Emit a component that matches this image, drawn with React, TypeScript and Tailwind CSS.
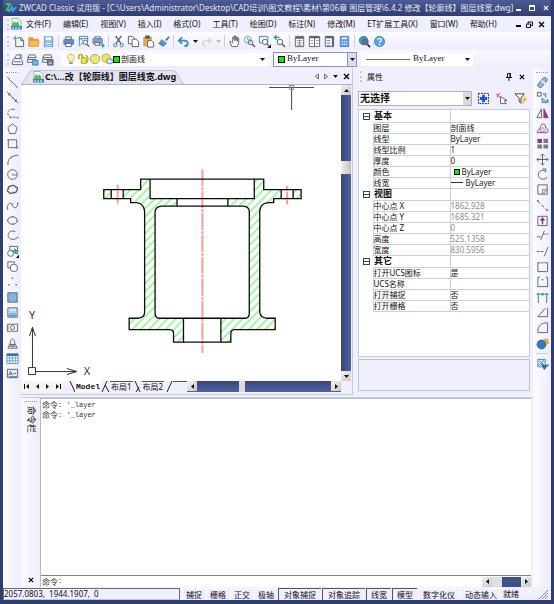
import type { ReactNode } from "react";

const S = "#5b6068";
const B = "#3f86c8";
const P = "#8a3a86";

const Icon = ({ children, className = "" }: { children: ReactNode; className?: string }) => (
  <svg viewBox="0 0 14 14" width="14" height="14" fill="none" stroke={S} className={`shrink-0 ${className}`}>
    {children}
  </svg>
);

/* Standard toolbar */
const fileTools: [string, ReactNode][] = [
  ["New", <><path d="M4 5v7.500h8.500V6L9.500 3H6" /><path d="M9.500 3v3h3" /><path d="M1 3.500h5M3.500 1v5" stroke="#2fa36b" /></>],
  ["Open", <><path d="M2 3h4l1 1.500h5V12H2z" fill="#e8a33a" stroke="#d9962f" /><path d="M2 12l1.500-6H13l-1 6z" fill="#f5bd5c" stroke="#e0a03c" /></>],
  ["Save", <><path d="M2.500 2h9v10.500h-9z" fill="#8fbde8" stroke="#5d97cf" /><path d="M4 2.500h6v3H4z" fill="#fff" stroke="none" /><path d="M4 8.500h6V12H4z" fill="#e7f1fb" stroke="none" /><path d="M4 10.500h6" stroke="#5d97cf" /></>],
];
const printTools: [string, ReactNode][] = [
  ["Print", <><path d="M4 2h6v3H4z" fill="#e8eef5" /><path d="M2 5h10.500v5H2z" fill="#5d93c8" stroke="#4a80b8" /><path d="M4 9h6v3.500H4z" fill="#fff" /></>],
  ["Preview", <><path d="M2.500 12V1.500h9V8" stroke={B} /><path d="M2 4h10M4 4l3 3-3 4" stroke={B} /><circle cx="9" cy="8" r="2.300" fill="#fff" /><path d="M10.800 10l2.200 2.500" strokeWidth="1.500" /></>],
  ["Publish", <><path d="M3 2h6v2H3z" fill="#fff" /><path d="M1 4h10v5H1z" fill="#7aa5cf" stroke="#5d8ab5" /><path d="M3 8h5v3H3z" fill="#fff" /><path d="M7 10.500h4V8.500l3 3-3 2.500v-2z" fill="#2fa36b" stroke="none" /></>],
];
const editTools: [string, ReactNode][] = [
  ["Cut", <><path d="M4 1l5.500 8M10 1L4.500 9" strokeWidth="1.500" /><circle cx="3.500" cy="11" r="1.800" stroke="#3474b3" /><circle cx="10.500" cy="11" r="1.800" stroke="#3474b3" /></>],
  ["Copy", <><path d="M1.500 1.500H6L8.500 4v5.500h-7z" fill="#fff" /><path d="M5.500 4.500H10L12.500 7v5.500h-7z" fill="#fff" /></>],
  ["Paste", <><path d="M2 2.500h8v9H2z" fill="#eda94a" stroke="#d48f2e" /><path d="M4 1h4v2.500H4z" fill={S} /><path d="M6 6h4l2.500 2v5H6z" fill="#fff" /></>],
  ["Match", <><path d="M13 2L9.500 6" strokeWidth="1.600" /><path d="M5 5l5 4-2 2-5-3z" fill="#5c9bd4" stroke="#4a86c0" /><path d="M3 7.500L1 9l6 4 1-2z" fill="#4a86c0" stroke="none" /></>],
];
const undoIcon = <><path d="M5.500 2.500L2 6l3.500 3.500" stroke={B} strokeWidth="2" /><path d="M2.500 6H8c5 0 4.500 6 0 6" stroke={B} strokeWidth="2" /></>;
const redoIcon = <><path d="M9 3l3 3-3 3M12 6H6c-4 0-4 5.500 0 5.500" stroke="#d3d6e2" strokeWidth="1.500" /></>;
const viewTools: [string, ReactNode][] = [
  ["Pan", <path d="M4 8L2.500 6.500l-.5 1 2 5h6l1.500-4v-5l-1-.5-.5 4V2.500L9 1.500 8.500 6V1.500L7 1v5L6 2l-1 .5V9" fill="#fff" />],
  ["Zoom", <><circle cx="5" cy="5" r="3.800" stroke="#69a2d8" /><path d="M5 2.500V5h2" stroke="#69a2d8" /><circle cx="8" cy="8" r="2.500" /><path d="M10 10l3 3" strokeWidth="1.600" /></>],
  ["Zoom window", <><path d="M1.500 1.500h9v7h-9z" stroke={B} /><circle cx="7.500" cy="7.500" r="2.800" fill="#fff" /><path d="M9.500 9.500l2 2" strokeWidth="1.500" /><path d="M14 10v4h-4z" fill="#111" stroke="none" /></>],
  ["Zoom previous", <><path d="M7 2.500H2M4 .5l-2.500 2L4 5" stroke="#2fa36b" strokeWidth="1.500" /><circle cx="7.500" cy="7.500" r="3" /><path d="M9.800 9.800L13 13" strokeWidth="1.500" /></>],
];
const paletteTools: [string, ReactNode][] = [
  ["Properties", <><path d="M2.500 1.500h9v11h-9z" fill="#fff" /><path d="M3 3h8" strokeWidth="2" /><path d="M4 6h6M4 8.500h6M4 11h6M7 5v7" stroke="#8b9098" /></>],
  ["Design center", <><path d="M1.500 1.500h11v11h-11zM7 2v10" fill="#fff" /><path d="M2 2.500h10" strokeWidth="2" /><path d="M8.500 6h3M8.500 9h3M3 6h2.500M3 9h2.500" stroke="#8b9098" /></>],
  ["Tool palettes", <><path d="M2.500 1.500h9v11h-9z" fill="#fff" /><path d="M3 2.500h8M10.500 3v9" strokeWidth="1.800" /><path d="M4 6h4M4 8.500h4M4 11h4" stroke={B} /></>],
  ["Calculator", <><path d="M2.500 1.500h9v11h-9z" fill="#6b9be0" stroke="#4a7fd0" /><path d="M4 3.500h6" stroke="#dce9ff" strokeWidth="2" /><path d="M4 7.500h6M4 10h6" stroke="#fff" strokeDasharray="1.500 .8" /></>],
];
const helpTools: [string, ReactNode][] = [
  ["Find", <><circle cx="6" cy="6" r="4.500" fill="#4a8ed0" stroke="#3d72a8" /><path d="M3 4l3-2 1 4-3 3z" fill="#49a857" stroke="none" /><circle cx="8" cy="7.500" r="3" fill="#6b4a9a" fillOpacity=".5" /><path d="M10 10l3 3" stroke="#333" strokeWidth="2" /></>],
  ["Help", <><circle cx="7" cy="7" r="5.500" fill="#5aa2de" stroke="#3f86c8" /><path d="M5 5.500c0-2.500 4-2.500 4 0C9 7 7 7 7 8.500M7 9.800v1.400" stroke="#fff" strokeWidth="1.400" /></>],
];

const layerTools: [string, ReactNode][] = [
  ["Layers", <><path d="M1.500 9l2-3h7l2 3v3.500h-11z" fill="#f5f6f8" /><path d="M3 9.500h8M4 5.500L6 2h4v4" /><path d="M9.500 1.500c3 0 3 4 1 4" stroke={B} /></>],
  ["Layer previous", <><path d="M2 5l1.500-3h6L11 5zM2 5v2h9M1.500 7.500v2.500H8" fill="#f5f6f8" /><path d="M7 8h6v5H7z" fill="#7fb2e2" stroke="#3f86c8" /></>],
  ["Layer states", <><path d="M2 5l1.500-3h7L12 5zM2 5v2h10M1.500 7.500v2.500H7" fill="#f5f6f8" /><path d="M7 7h6v6H7z" fill="#6f7f92" /><path d="M8.500 11h3" stroke="#fff" /></>],
];
const layerFlags: ReactNode[] = [
  <><path d="M7 1.500c-5 0-4.500 5-2 7V10h4V8.500c2.500-2 3-7-2-7z" fill="#fff7a8" stroke="#c3aa3a" /><path d="M5 12h4" stroke="#777" strokeWidth="1.500" /></>,
  <><path d="M2 7V4C2 1 6.500 1 6.500 4v2" stroke="#b5a922" strokeWidth="2" /><path d="M5 5.500h6V12H5z" fill="#efe64a" stroke="#a89c24" /><path d="M10 2.500c4 1 3 6 2 8.500" stroke="#b5a922" strokeWidth="1.500" /></>,
  <><circle cx="7" cy="7" r="5.500" fill="#d9e0b8" stroke="#8f9a8f" /><circle cx="7" cy="7" r="4.200" fill="#f8ee42" stroke="none" /></>,
  <><circle cx="6" cy="6" r="4.800" fill="#f1e84c" stroke="#aaa14a" /><path d="M7 7h6v5.500H7z" fill="#e3eefb" stroke="#5e87b5" /></>,
];

/* Draw toolbar, left edge */
const drawTools: [string, ReactNode][] = [
  ["Line", <><path d="M2 2l10 10" /><path d="M1.500 1.500h1M11.500 12.500h1" stroke={B} strokeWidth="1.500" /></>],
  ["Construction line", <><path d="M2 2l10 10M3 5V3h2M11 9v2H9" /><path d="M6.500 7.500h1.500M1 1.500h1M12 12.500h1" stroke={B} strokeWidth="1.500" /></>],
  ["Polyline", <><path d="M8 2.500H5.500c-5 1-4.500 7 0 8.500H12" strokeDasharray="3 1" /><path d="M8 2.500h1.500M4 11.500h1.500M12 11.500h1.500" stroke={B} strokeWidth="1.500" /></>],
  ["Polygon", <path d="M7 2l5 4-2 6.500H4L2 6z" />],
  ["Rectangle", <><path d="M2.500 3h9v8.500h-9z" /><path d="M1.500 3H3M11 11.500h2" stroke={B} strokeWidth="1.800" /></>],
  ["Arc", <><path d="M2 12c0-5 3-9 10-9.500" /><path d="M1.500 12h1.500M5 5h1.500M11.500 2.500H13" stroke={B} strokeWidth="1.500" /></>],
  ["Circle", <><circle cx="7" cy="7" r="5.200" /><path d="M7 7.500h5" stroke={B} /><path d="M6.500 7h1" stroke={B} strokeWidth="1.500" /></>],
  ["Revision cloud", <path d="M5 3.500c2-1.500 4-1 5 .5 3 .5 3 2.500 1.500 4 0 2-2 3-3.500 2-1.500 1.500-4 1.500-4.500 0C1 9.500 1 7 2.500 6.500 2 4.500 3 3.500 5 3.500z" strokeWidth="1.500" />],
  ["Spline", <><path d="M1 10C3 2 6 4 7 7s5 4 5.500-2" /><path d="M1 10.500h1.500M6 5.500h1.500M12 4.500h1.500" stroke={B} strokeWidth="1.500" /></>],
  ["Ellipse", <><ellipse cx="7" cy="7" rx="5.200" ry="4" /><path d="M1 7h1.500M11.500 7H13M6.500 3H8M6.500 11H8" stroke={B} strokeWidth="1.500" /></>],
  ["Elliptical arc", <><path d="M9 2.500C4 1 1.500 5 2.500 8s6 5 10 1" /><path d="M8.500 2.500H10M12 9h1.500" stroke={B} strokeWidth="1.500" /></>],
  ["Insert block", <><path d="M4 6V1.500h8.500V9H10" /><circle cx="5" cy="9" r="3.200" fill="#fff" /><path d="M6 6.500h5M9 4l2.500 2.500L9 9" stroke="#2fa36b" strokeWidth="1.500" /><path d="M14 10.500V14h-3.500z" fill="#111" stroke="none" /></>],
  ["Make block", <><path d="M2 8.500V2h7v2" /><circle cx="8.500" cy="8.500" r="4" fill="#fff" /><path d="M2 8.500h3" /></>],
  ["Point", <path d="M6.200 3.500h1.600M2.200 10.500h1.600M10.200 10.500h1.600" stroke={B} strokeWidth="1.600" />],
  ["Hatch", <><path d="M2 2h10v10H2z" fill="#8fb8e2" /><path d="M3 11l8-8M3 6l3-3M8 11l3-3" stroke="#6b9dd2" /></>],
  ["Gradient", <><path d="M2 2h10v10H2z" fill="#d3e5f7" /><path d="M3 10.500h8" stroke="#5a94cc" strokeWidth="2" /><path d="M3 8.500h8" stroke="#86b2de" strokeWidth="2" /><path d="M3 6.500h8" stroke="#b3d0ec" strokeWidth="2" /></>],
  ["Region", <><path d="M1.500 3.500h11v7.500h-11z" fill="#fff" /><circle cx="7" cy="7.200" r="2.200" /><path d="M3 4v6" stroke="#a6aab0" /></>],
  ["Wipeout", <><path d="M5 5c0-4 4-4 4 0l1 3H4zM3.500 8.500h7l1.500 3.500H2z" /><path d="M4 10h6" /></>],
  ["Table", <><path d="M1 2h12v10.500H1z" fill="#fff" stroke="#5e8fc4" /><path d="M1 3h12" stroke="#2d6fb6" strokeWidth="2.500" /><path d="M1 6.500h12M1 9.500h12M4 4v8M7 4v8M10 4v8" stroke="#6e9dcf" /></>],
  ["Image", <><path d="M1.500 2.500h11v9h-11z" fill="#e8edf3" /><path d="M3 9l2-4 2 4M3.500 7.500h3" stroke="#2d6fb6" /><path d="M8 7h3M3 10.500h8.500" /></>],
];

/* Modify toolbar, right edge */
const modifyTools: [string, ReactNode][] = [
  ["Erase", <><path d="M2 9l6-7c2-1.500 5 1 4 3l-6 7c-2 1.500-5-1-4-3z" fill="#8fb4dc" stroke="#59779b" /><path d="M6 5l4 3.500" stroke="#f4f7ff" strokeWidth="2" /></>],
  ["Copy objects", <><path d="M1.500 1.500h4v4h-4z" /><path d="M7 3h3.500v4M6.500 7.500v5H13V9l-2.500 2z" stroke={B} fill="#9ac2ea" /></>],
  ["Mirror", <><path d="M6 2v9.500H1z" /><path d="M8.500 2v9.500H13z" fill={P} stroke={P} /></>],
  ["Offset", <><path d="M1.500 11.500c0-4 2-4 3-4 0-7 6-7 6-1 3 0 3 5 1 5z" stroke={P} /><path d="M4 10c0-2 2-1.500 2.500-2.500C7 5 8 5 8.500 8c2 0 2 2 1 2z" stroke="#a985aa" /></>],
  ["Array", <><path d="M1.500 8h5v4.500h-5zM8 8h5v4.500H8zM8 2h5v4.500H8z" fill="#777b85" stroke="none" /><path d="M1.500 2h5v4.500h-5z" fill={P} stroke="none" /></>],
  ["Move", <path d="M7 1v12M1 7h12M5 3l2-2 2 2M5 11l2 2 2-2M3 5L1 7l2 2M11 5l2 2-2 2" />],
  ["Rotate", <path d="M10 3.500C6 1 2 4 2.500 8s7 6 9.500 1.500M7 1h3.500v3.500" />],
  ["Scale", <><path d="M2 2h10v10H2z" /><path d="M7 7h5v5H7z" fill="#e6e6ee" stroke="#888" /><path d="M8 11l3-3" /></>],
  ["Stretch", <><path d="M1.500 2l10.500 10" stroke={P} strokeDasharray="4 2" /><path d="M1 2h2M11 12h2" strokeWidth="1.500" /></>],
  ["Extrude", <><path d="M2 2.500h10v10H2z" /><path d="M7 11V5M5 7l2-2.500L9 7" stroke={P} strokeWidth="1.600" /></>],
  ["Trim", <path d="M1 8.500h4M8 5.500h2M11 5.500h2M5 12l4-10" />],
  ["Extend", <path d="M1 7h3M5 7h3M9 12l4-10" />],
  ["Break at point", <><path d="M5 3H2v9.500h10.500V3H9" /><path d="M6 3h2" stroke={B} strokeWidth="1.500" /></>],
  ["Break", <><path d="M2 3v9.500h10.500V3" /><path d="M2 2.500h2M10.500 2.500h2M6 5h2" stroke={B} strokeWidth="1.500" /></>],
  ["Join", <><path d="M2.500 5v8M11.500 5v8" /><path d="M1 3.500h3M10 3.500h3M5 3.500h4" stroke="#2f9a74" strokeWidth="2.200" /></>],
  ["Chamfer", <><path d="M2 11.500h10.500V2" /><path d="M2 11.500l8-9" stroke={P} /></>],
  ["Fillet", <><path d="M2 12.500h10.500V2H10" /><path d="M2 12C2 6 5 2.500 10 2" stroke={P} /></>],
  ["Explode", <><circle cx="6" cy="8" r="4.800" fill="#3b79bb" stroke="#2b649f" /><path d="M9 2l2 1 2-1-.500 2.500L14 7l-3-.5z" fill="#f2b33d" stroke="#e39b27" /></>],
];
const matchProps = <><path d="M2 1.500h8v8H2z" fill="#d6e7f8" stroke={B} /><path d="M3 8l6-6M4 3l4 4" stroke={B} /><path d="M6 7l3 5.500 2-3 2.500-2-3.500.5z" fill="#3e6fa3" stroke="#3e5f85" /></>;

const DwgIcon = () => (
  <svg viewBox="0 0 12 12" width="12" height="12" className="shrink-0">
    <path d="M2 .5h6l3 3v7H2z" fill="#fff" stroke="#8fb4cf" />
    <path d="M1.500 8l2.500-5 2 2 2-2 1.500 5z" fill="#5cb955" />
    <path d="M1 8h11v3.500H1z" fill="#3f83c2" />
    <path d="M2 10h2M5 10h2M8 10h2" stroke="#fff" />
  </svg>
);

const Grip = () => <span className="h-[11px] w-0 border-l-2 border-dotted border-[#c6c9d6]" />;
const TopGrip = () => <span className="w-3 shrink-0 border-t border-dotted border-[#9b9fb0]" />;
const Separator = () => <span className="mx-[2px] h-3 w-px bg-[#cfd1e0]" />;

const Tool = ({ name, children }: { name: string; children: ReactNode }) => (
  <button type="button" aria-label={name} className="flex h-4 w-[15px] shrink-0 items-center justify-center hover:bg-[#dcdcf4]">
    <Icon className="h-[13px] w-[13px]">{children}</Icon>
  </button>
);

const Tools = ({ items }: { items: [string, ReactNode][] }) => (
  <>
    {items.map(([name, art]) => (
      <Tool key={name} name={name}>{art}</Tool>
    ))}
  </>
);

const Caret = ({ dir = "down", color = "#111" }: { dir?: "down" | "up" | "left" | "right"; color?: string }) => {
  const shapes = { down: "M0 1h5L2.500 4z", up: "M0 4h5L2.500 1z", left: "M4 0v5L1 2.500z", right: "M1 0v5l3-2.500z" };
  return (
    <svg viewBox="0 0 5 5" width="5" height="5" className="shrink-0">
      <path d={shapes[dir]} fill={color} />
    </svg>
  );
};

const Close = ({ size = 7, color = "#111" }: { size?: number; color?: string }) => (
  <svg viewBox="0 0 7 7" width={size} height={size} stroke={color} strokeWidth="1.500">
    <path d="M1 1l5 5M6 1L1 6" />
  </svg>
);

const TitleBar = () => (
  <header className="flex h-4 items-center bg-linear-to-b from-[#4c5c96] to-[#2f3c72] pr-[2px] pl-[2px] text-[#e6e9f5]">
    <svg viewBox="0 0 12 12" width="12" height="12" fill="none" strokeWidth="2">
      <path d="M1 2h4L2 8h3" stroke="#3fc463" />
      <path d="M4 10l3-5 1 4 3-4" stroke="#3aa3e6" />
    </svg>
    <h1 className="ml-[2px] flex-1 text-[8px] leading-4 whitespace-nowrap">
      ZWCAD Classic 试用版 - [C:\Users\Administrator\Desktop\CAD培训\图文教程\素材\第06章 图层管理\6.4.2 修改【轮廓线】图层线宽.dwg]
    </h1>
    <div className="flex shrink-0 items-center gap-2">
      <button type="button" aria-label="Minimize" className="h-[5px] w-[5px] border-b-2 border-white" />
      <button type="button" aria-label="Maximize" className="h-[6px] w-[6px] border border-t-2 border-white" />
      <button type="button" aria-label="Close"><Close size={6} color="#fff" /></button>
    </div>
  </header>
);

const menus = ["文件(F)", "编辑(E)", "视图(V)", "插入(I)", "格式(O)", "工具(T)", "绘图(D)", "标注(N)", "修改(M)", "ET扩展工具(X)", "窗口(W)", "帮助(H)"];

const MenuBar = () => (
  <nav className="flex h-4 items-center bg-[#f0effd] pr-[6px] pl-1">
    <Grip />
    <span className="mr-1 ml-px"><DwgIcon /></span>
    <div className="flex flex-1 gap-3">
      {menus.map((m) => (
        <button key={m} type="button" className="text-[8px] leading-4 whitespace-nowrap hover:bg-[#dcdcf4]">{m}</button>
      ))}
    </div>
    <div className="flex shrink-0 items-center gap-[5px]">
      <button type="button" aria-label="Minimize drawing" className="h-[6px] w-[5px] border-b-2 border-black" />
      <button type="button" aria-label="Restore drawing">
        <svg viewBox="0 0 7 7" width="7" height="7" fill="none" stroke="#111">
          <path d="M2 2.500V1h4.500v3.500H5M.5 3h4v3.500h-4z" />
        </svg>
      </button>
      <button type="button" aria-label="Close drawing"><Close /></button>
    </div>
  </nav>
);

const StandardBar = () => (
  <div className="flex h-[18px] items-center bg-linear-to-b from-[#fbfbff] to-[#eeedfc] pl-1">
    <Grip />
    <span className="w-[2px]" />
    <Tools items={fileTools} />
    <Separator />
    <Tools items={printTools} />
    <Separator />
    <Tools items={editTools} />
    <Separator />
    <Tool name="Undo">{undoIcon}</Tool>
    <button type="button" aria-label="Undo list" className="flex w-2 justify-center"><Caret /></button>
    <Tool name="Redo">{redoIcon}</Tool>
    <button type="button" aria-label="Redo list" className="flex w-2 justify-center"><Caret color="#b5b8c6" /></button>
    <Separator />
    <Tools items={viewTools} />
    <Separator />
    <Tools items={paletteTools} />
    <Separator />
    <Tools items={helpTools} />
  </div>
);

const Select = ({ label, value, className = "" }: { label: string; value: string; className?: string }) => (
  <select aria-label={label} defaultValue={value} className={`min-w-0 flex-1 appearance-none bg-transparent outline-none ${className}`}>
    <option>{value}</option>
  </select>
);

const LayerBar = () => (
  <div className="flex h-[18px] items-center bg-linear-to-b from-[#f8f8ff] to-[#eeedfc] pl-1">
    <Grip />
    <span className="w-px" />
    <Tools items={layerTools} />
    <span className="w-[6px]" />
    <div className="flex h-[13px] w-[209px] items-center bg-white pr-[5px] pl-1">
      {layerFlags.map((flag, i) => (
        <span key={i} className="flex w-3 justify-center"><Icon className="h-3 w-3">{flag}</Icon></span>
      ))}
      <span className="mr-px h-[7px] w-[7px] border border-black bg-[#00f000]" />
      <Select label="Layer" value="剖面线" className="text-[8px]" />
      <Caret />
    </div>
    <div className="ml-[3px] flex h-[15px] w-[84px] items-center border border-[#8a92b8] bg-white pl-1">
      <span className="mr-[2px] h-[7px] w-[7px] border border-black bg-[#00f000]" />
      <Select label="Color" value="ByLayer" className="font-['Liberation_Serif',serif] text-[9px]" />
      <span className="flex h-full w-[9px] items-center justify-center border-l border-[#8a92b8] bg-[#dcdcf0]"><Caret /></span>
    </div>
    <div className="ml-1 flex h-[13px] w-[112px] items-center bg-white pr-[3px] pl-[5px]">
      <span className="mr-[3px] h-px w-11 bg-[#7b6670]" />
      <Select label="Linetype" value="ByLayer" className="font-['Liberation_Serif',serif] text-[9px]" />
      <Caret />
    </div>
  </div>
);

const SideBar = ({ items, children }: { items: [string, ReactNode][]; children?: ReactNode }) => (
  <aside className="flex w-[18px] shrink-0 flex-col items-center bg-linear-to-r from-[#fbfbff] to-[#eeedfc] pt-1">
    <TopGrip />
    <div className="flex flex-col pt-[2px]">
      {items.map(([name, art]) => (
        <button key={name} type="button" aria-label={name} className="flex h-[15px] w-4 shrink-0 items-center justify-center hover:bg-[#dcdcf4] nth-[3n]:h-4">
          <Icon className="h-[13px] w-[13px]">{art}</Icon>
        </button>
      ))}
    </div>
    {children}
  </aside>
);

const ScrollButton = ({ dir }: { dir: "up" | "down" | "left" | "right" }) => (
  <button type="button" aria-label={`Scroll ${dir}`} className="flex h-[10px] w-[10px] shrink-0 items-center justify-center bg-linear-to-br from-[#f4f4f4] to-[#c6c6c6]">
    <Caret dir={dir} />
  </button>
);

const outline =
  "M104 189H141V178.500H264.500V189H302V198H274.500V202H269Q260.500 203 260.500 211V312Q261 317 267 318H276V329.500H235Q231.500 330 231.500 333V342H174V333Q174 330 170.500 329.500H129.500V318H139Q145 317 145 312V211Q144.500 203 137 202H131V198H104Z";
const cavity =
  "M155.500 211Q156 206 162 205.500H244Q250 206 250 211V313Q250 317 247 318H158.500Q155.500 317 155.500 313Z";
/* Wall material only, used for the hatch */
const section = `${outline}${cavity}M150.500 178.500H255V198H150.500ZM177.500 198H228.500V206H177.500ZM184 317H221.500V342H184ZM111.500 189H123.500V198H111.500ZM282 189H294V198H282Z`;

const Drawing = () => (
  <svg viewBox="21 85 321 295" preserveAspectRatio="xMidYMid meet" className="absolute inset-0 h-full w-full bg-white" fill="none">
    <defs>
      <pattern id="hatch" width="5.900" height="5.900" patternUnits="userSpaceOnUse" patternTransform="rotate(45)">
        <path d="M2 0v5.900" stroke="#2ff02f" strokeWidth=".9" />
      </pattern>
    </defs>
    <path d={section} fill="url(#hatch)" fillRule="evenodd" />
    <g stroke="#ff9a9a" strokeWidth="2">
      <path d="M203 168.500V353" strokeDasharray="17 1 3 1" />
      <path d="M118 184v19M288 185v19" strokeDasharray="5 1 7 1" />
    </g>
    <g stroke="#0a0a0a" strokeWidth="1.300">
      <path d={outline} />
      <path d={cavity} />
      <path d="M150.500 178.500V198H255V178.500M177.500 198v7.500M228.500 198v7.500M184 318v24M221.500 318v24" />
      <path d="M111.500 189v9M123.500 189v9M282 189v9M294 189v9" />
    </g>
    <g stroke="#444">
      <path d="M270 86.500h45M292.500 87v22" />
      <path d="M290.500 84.500h4v4h-4z" stroke="#888" />
    </g>
    <g stroke="#333">
      <path d="M28.500 367.500h7v7h-7zM36 371.500h41M67 368.500l10 3-10 3M32.500 367v-40M29.500 336l3-9 3 9" />
    </g>
    <g fill="#333" fontFamily="Noto Sans, sans-serif" fontSize="11">
      <text x="29" y="319">Y</text>
      <text x="84" y="375">X</text>
    </g>
  </svg>
);

const DocumentPane = () => (
  <section className="mb-[2px] flex min-w-0 flex-1 flex-col border-r border-b border-[#c5ccd8] bg-[#f0effd]">
    <div className="flex h-4 shrink-0 items-end">
      <div className="relative flex h-[14px] items-center pr-2 pl-[11px]">
        <svg viewBox="0 0 160 14" preserveAspectRatio="none" className="absolute inset-0 h-full w-full" fill="#e4e4f0" stroke="#c3c8d6">
          <path d="M0 14C5 12 6 1 11 .5H149C154 1 155 12 160 14" />
        </svg>
        <span className="relative flex items-center gap-px">
          <DwgIcon />
          <b className="text-[9px] leading-3 whitespace-nowrap">C:\...改【轮廓线】图层线宽.dwg</b>
        </span>
      </div>
      <div className="ml-auto flex h-4 items-center gap-[5px] pr-[2px]">
        <button type="button" aria-label="Previous drawing">
          <svg viewBox="0 0 5 7" width="4" height="7" fill="none" stroke="#444"><path d="M4.500.5v6L.5 3.500z" /></svg>
        </button>
        <button type="button" aria-label="Next drawing">
          <svg viewBox="0 0 5 7" width="4" height="7" fill="none" stroke="#444"><path d="M.5.5v6l4-3z" /></svg>
        </button>
        <button type="button" aria-label="Drawing list"><Caret /></button>
        <button type="button" aria-label="Close tab"><Close /></button>
      </div>
    </div>
    <div className="flex min-h-0 flex-1 border-t border-[#aeb6c2]">
      <div className="relative flex-1">
        <Drawing />
      </div>
      <div className="flex w-[10px] flex-col bg-linear-to-r from-[#39467c] to-[#5162a0]">
        <ScrollButton dir="up" />
        <span className="flex-[66]" />
        <span className="h-[13px] bg-linear-to-r from-[#efefef] to-[#c4c4c4]" />
        <span className="flex-[197]" />
        <ScrollButton dir="down" />
      </div>
      <span className="w-px" />
    </div>
    <div className="mb-[2px] flex h-[11px] shrink-0 pr-[11px]">
      <div className="flex w-[43px] items-center justify-around bg-[#f4f4f4]">
        {["First", "Previous", "Next", "Last"].map((n, i) => (
          <button key={n} type="button" aria-label={`${n} layout`} className="flex items-center">
            {i === 0 && <span className="h-[5px] w-px bg-black" />}
            <Caret dir={i < 2 ? "left" : "right"} />
            {i === 3 && <span className="h-[5px] w-px bg-black" />}
          </button>
        ))}
      </div>
      <div className="flex flex-1 items-stretch text-[8px] leading-[11px]">
        <span className="w-[5px]" />
        <svg viewBox="0 0 6 11" width="6" height="11" stroke="#222"><path d="M1 0l5 11" /></svg>
        <button type="button" className="bg-white px-px font-['Liberation_Mono',monospace] font-bold">Model</button>
        <svg viewBox="0 0 9 11" width="9" height="11" stroke="#222"><path d="M1 11L6 0M4 4l4 7" /></svg>
        <button type="button" className="border-t border-[#555] px-px leading-[10px]">布局1</button>
        <svg viewBox="0 0 9 11" width="9" height="11" stroke="#222"><path d="M2 0l5 11M3 11l3-5" /></svg>
        <button type="button" className="border-t border-[#555] px-px leading-[10px]">布局2</button>
        <svg viewBox="0 0 9 11" width="9" height="11" stroke="#222"><path d="M3 11L8 0" /></svg>
        <span className="flex-1 border-t border-[#555]" />
      </div>
      <div className="flex w-[154px] items-stretch bg-linear-to-b from-[#39467c] to-[#5162a0]">
        <ScrollButton dir="left" />
        <span className="flex-[42]" />
        <span className="w-[6px] bg-[#dcdcdc]" />
        <span className="flex-[86]" />
        <ScrollButton dir="right" />
      </div>
    </div>
  </section>
);

type Row = { label: string; value?: string; muted?: boolean; mark?: "color" | "line" };
const groups: { title: string; rows: Row[] }[] = [
  {
    title: "基本",
    rows: [
      { label: "图层", value: "剖面线" },
      { label: "线型", value: "ByLayer" },
      { label: "线型比例", value: "1" },
      { label: "厚度", value: "0" },
      { label: "颜色", value: "ByLayer", mark: "color" },
      { label: "线宽", value: "ByLayer", mark: "line" },
    ],
  },
  {
    title: "视图",
    rows: [
      { label: "中心点 X", value: "1862.928", muted: true },
      { label: "中心点 Y", value: "1685.321", muted: true },
      { label: "中心点 Z", value: "0", muted: true },
      { label: "高度", value: "525.1358", muted: true },
      { label: "宽度", value: "830.5956", muted: true },
    ],
  },
  {
    title: "其它",
    rows: [
      { label: "打开UCS图标", value: "是" },
      { label: "UCS名称" },
      { label: "打开捕捉", value: "否" },
      { label: "打开栅格", value: "否" },
    ],
  },
];

const PropertiesPane = () => (
  <section className="ml-1 flex w-[176px] shrink-0 flex-col bg-[#f0effd] pr-[3px] pl-px">
    <div className="flex h-[23px] shrink-0 items-center pr-[5px] pb-[6px] pl-[2px]">
      <Grip />
      <h2 className="ml-[5px] flex-1 text-[8px]">属性</h2>
      <button type="button" aria-label="Pin" className="mr-[7px]">
        <svg viewBox="0 0 6 8" width="6" height="8" fill="none" stroke="#111"><path d="M1.500.500h3v4h-3zM0 4.500h6M3 5v3M4 1v3" /></svg>
      </button>
      <button type="button" aria-label="Close properties"><Close size={6} /></button>
    </div>
    <div className="mb-[3px] flex h-[15px] shrink-0 items-center">
      <div className="flex h-[15px] w-[114px] items-center border border-[#aab0bc] bg-white pl-px">
        <Select label="Selection" value="无选择" className="text-[10px] font-bold" />
        <span className="flex h-full w-2 items-center justify-center bg-[#dadada]"><Caret /></span>
      </div>
      <div className="flex flex-1 justify-around pl-[2px]">
        <Tool name="Quick select"><path d="M1.500 1.500h11v11h-11z" strokeDasharray="2 1" stroke="#222" /><path d="M7 3v8M3 7h8" stroke="#1c55e0" strokeWidth="3" /></Tool>
        <Tool name="Select objects"><path d="M6 5l7 4-3 .5 2 3H6z" fill="#fff" /><path d="M1 2l5 4M5 1L2 6" stroke="#d23b4a" /></Tool>
        <Tool name="Filter"><path d="M1 2h10L7.500 6.500V12l-2-1.500v-4z" fill="#fff" stroke="#333" /><path d="M12 5L9 9h2l-2 4 4.500-5h-2z" fill="#f6c800" stroke="#e5b400" strokeWidth=".5" /></Tool>
      </div>
    </div>
    <div className="flex-1 border border-[#c5ccd4] bg-white">
      <table className="w-full table-fixed border-collapse text-[8px] leading-[10px]">
        <colgroup>
          <col className="w-[14px]" />
          <col className="w-[77px]" />
          <col />
        </colgroup>
        {groups.map((g) => (
          <tbody key={g.title}>
            <tr className="h-3">
              <td className="p-0">
                <button type="button" aria-label={`Collapse ${g.title}`} className="mx-auto flex h-[7px] w-[7px] items-center border border-[#444]">
                  <span className="h-px w-full bg-[#444]" />
                </button>
              </td>
              <th className="border-b border-[#d0d0d0] p-0 pl-px text-left text-[9px]">{g.title}</th>
              <td className="border-b border-l border-[#d0d0d0] p-0" />
            </tr>
            {g.rows.map((r) => (
              <tr key={r.label} className="h-[11px]">
                <td className="border-r border-[#d0d0d0] p-0" />
                <th className="border-b border-[#d0d0d0] p-0 text-left font-normal whitespace-nowrap">{r.label}</th>
                <td className={`border-b border-l border-[#d0d0d0] p-0 ${r.muted ? "text-[#8c8c8c]" : "text-[#222]"}`}>
                  <span className="flex h-[10px] items-center">
                    {r.mark === "color" && <span className="mr-[2px] ml-[3px] h-[6px] w-[6px] border border-black bg-[#00f000]" />}
                    {r.mark === "line" && <span className="mr-[3px] h-px w-3 bg-[#333]" />}
                    {r.value}
                  </span>
                </td>
              </tr>
            ))}
          </tbody>
        ))}
      </table>
    </div>
    <div className="mt-[2px] mb-[6px] h-8 shrink-0 border border-[#bcc4d0]" />
  </section>
);

const Prompt = ({ text = "" }: { text?: string }) => (
  <p className="flex h-[10px] items-center text-[#333]">
    <span className="text-[8px]">命令</span>
    <span className="font-['Liberation_Mono',monospace] text-[7px] whitespace-pre">: {text}</span>
  </p>
);

const CommandPane = () => (
  <section className="flex h-[190px] shrink-0 border-t border-[#c5ccd8]">
    <div className="flex w-[19px] shrink-0 flex-col items-center bg-linear-to-r from-[#fbfbff] to-[#eeedfc] pt-[3px] pb-1">
      <TopGrip />
      <h2 className="mt-1 text-[9px] leading-3 [text-orientation:sideways] [writing-mode:vertical-rl]">命令栏</h2>
      <button type="button" aria-label="Close command line" className="mt-auto"><Close size={6} /></button>
    </div>
    <div className="flex min-w-0 flex-1 flex-col border-l border-[#b4bcc6]">
      <div className="flex-1 border-t border-[#b4bcc6] bg-white pt-px pl-px">
        <Prompt text="'_layer" />
        <Prompt text="'_layer" />
      </div>
      <div className="flex h-3 items-center border-t border-[#808080] bg-white pl-px">
        <label className="flex flex-1 items-center">
          <Prompt />
          <input type="text" className="min-w-0 flex-1 font-['Liberation_Mono',monospace] text-[7px] outline-none" />
        </label>
        <div className="flex w-[49px] bg-[#3f4f8a]">
          <ScrollButton dir="left" />
          <span className="w-[10px] bg-[#e0e0e0]" />
          <span className="flex-1" />
          <ScrollButton dir="right" />
        </div>
      </div>
    </div>
    <div className="w-[2px]" />
  </section>
);

const statusToggles: [string, boolean][] = [
  ["捕捉", false], ["栅格", false], ["正交", false], ["极轴", false],
  ["对象捕捉", true], ["对象追踪", true], ["线宽", true], ["模型", true],
  ["数字化仪", false], ["动态输入", false],
];

const toggleStyle = (name: string, on: boolean) => {
  if (!on) return name.length > 2 ? "border-white px-1" : "border-white px-[3px]";
  return name.length > 2 ? "border-[#555560] px-[5px]" : "border-[#555560] px-1";
};

const StatusBar = () => (
  <footer className="flex h-[13px] shrink-0 items-stretch bg-[#f0effd] pt-px text-[8px] leading-[11px]">
    <output className="mr-[2px] w-[177px] shrink-0 border border-[#6c6c78] border-b-[#c5c5d5] leading-[10px] whitespace-pre">2057.0803,  1944.1907,  0</output>
    {statusToggles.map(([name, on]) => (
      <button
        key={name}
        type="button"
        aria-pressed={on}
        className={`mr-px border-t border-l leading-[10px] whitespace-nowrap ${toggleStyle(name, on)}`}
      >
        {name}
      </button>
    ))}
    <span className="ml-px">就绪</span>
    <svg viewBox="0 0 9 9" width="9" height="9" stroke="#7d86b5" className="mr-[3px] ml-auto self-center">
      <path d="M0 9l9-9M3 9l6-6M6 9l3-3" />
    </svg>
  </footer>
);

const App = () => (
  <div className="flex min-h-screen flex-col border-x-[3px] border-b-[4px] border-[#2f3d75] bg-[#f0effd] font-['Noto_Sans','Noto_Sans_CJK_SC',sans-serif] text-[#111]">
    <TitleBar />
    <MenuBar />
    <StandardBar />
    <LayerBar />
    <main className="flex flex-1">
      <SideBar items={drawTools} />
      <div className="flex min-w-0 flex-1 flex-col">
        <div className="flex min-h-0 flex-1">
          <DocumentPane />
          <PropertiesPane />
        </div>
        <CommandPane />
      </div>
      <SideBar items={modifyTools}>
        <span className="my-[2px] h-px w-3 bg-[#c9cbda]" />
        <Tool name="Match properties">{matchProps}</Tool>
      </SideBar>
    </main>
    <StatusBar />
  </div>
);

export default App;
